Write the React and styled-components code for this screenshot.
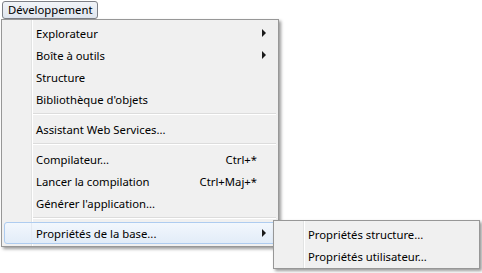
import React from 'react';
import styled, { createGlobalStyle } from 'styled-components';

const GlobalStyle = createGlobalStyle`
  html, body {
    margin: 0;
    background: #fff;
  }
  body {
    font-family: "Noto Sans", "Liberation Sans", sans-serif;
    font-size: 11.3px;
    color: #000;
  }
`;

const Page = styled.div`
  width: 482px;
  height: 273px;
  padding: 1px 0 0 1px;
  box-sizing: border-box;
`;

const MenuBarButton = styled.div`
  display: inline-flex;
  align-items: center;
  box-sizing: border-box;
  height: 18px;
  margin-left: 1px;
  padding: 0 4px 1px 5px;
  border: 1px solid #7d8087;
  border-radius: 3px;
  background: linear-gradient(#f1f4f8, #dfe5ee);
  line-height: 1;
`;

const MenuWrap = styled.div`
  position: relative;
  width: 278px;
`;

const Menu = styled.div`
  position: ${({ $sub }) => ($sub ? 'absolute' : 'relative')};
  left: ${({ $sub }) => ($sub ? '272px' : 'auto')};
  top: ${({ $sub }) => ($sub ? '201px' : 'auto')};
  width: ${({ $width }) => $width}px;
  box-sizing: border-box;
  padding: ${({ $sub }) => ($sub ? '2px 2px 1px' : '2px')};
  border: 1px solid #979797;
  background-color: #f0f0f0;
  background-image: linear-gradient(
    to right,
    transparent 29px,
    #e2e3e3 29px,
    #e2e3e3 30px,
    #ffffff 30px,
    #ffffff 31px,
    transparent 31px
  );
  box-shadow: 2px 2px 3px rgba(0, 0, 0, 0.4);
`;

const Item = styled.div`
  display: flex;
  align-items: center;
  box-sizing: border-box;
  height: 22px;
  padding-left: 31px;
  border: 1px solid ${({ $active }) => ($active ? '#aeccf0' : 'transparent')};
  border-radius: 3px;
  background: ${({ $active }) =>
    $active
      ? 'linear-gradient(to right, transparent 26px, #e3e9f2 26px, #e3e9f2 27px, transparent 27px), linear-gradient(#f2f7fd, #e2ecf8)'
      : 'transparent'};
  white-space: nowrap;
`;

const Label = styled.span`
  flex: 1;
`;

const Shortcut = styled.span`
  padding-right: 1px;
`;

const ArrowCell = styled.span`
  display: flex;
  align-items: center;
  justify-content: flex-start;
  width: 17px;
  padding-left: 4px;
  box-sizing: border-box;
`;

const Arrow = styled.span`
  width: 0;
  height: 0;
  border-left: 4px solid #1a1a1a;
  border-top: 4px solid transparent;
  border-bottom: 4px solid transparent;
`;

const Separator = styled.div`
  height: 1px;
  margin: 3px 0 3px 29px;
  background: #dcdcdc;
  border-bottom: 1px solid #fff;
`;

const mainItems = [
  { label: 'Explorateur', sub: true },
  { label: 'Boîte à outils', sub: true },
  { label: 'Structure' },
  { label: "Bibliothèque d'objets" },
  { sep: true },
  { label: 'Assistant Web Services...' },
  { sep: true },
  { label: 'Compilateur...', shortcut: 'Ctrl+*' },
  { label: 'Lancer la compilation', shortcut: 'Ctrl+Maj+*' },
  { label: "Générer l'application..." },
  { sep: true },
  { label: 'Propriétés de la base...', sub: true, active: true },
];

const subItems = ['Propriétés structure...', 'Propriétés utilisateur...'];

function MenuItem({ label, shortcut, sub, active }) {
  return (
    <Item $active={active}>
      <Label>{label}</Label>
      {shortcut && <Shortcut>{shortcut}</Shortcut>}
      <ArrowCell>{sub && <Arrow />}</ArrowCell>
    </Item>
  );
}

export default function App() {
  return (
    <Page>
      <GlobalStyle />
      <MenuBarButton>Développement</MenuBarButton>
      <MenuWrap>
        <Menu $width={278}>
          {mainItems.map((it, i) =>
            it.sep ? <Separator key={i} /> : <MenuItem key={i} {...it} />
          )}
        </Menu>
        <Menu $sub $width={207}>
          {subItems.map((label) => (
            <MenuItem key={label} label={label} />
          ))}
        </Menu>
      </MenuWrap>
    </Page>
  );
}
